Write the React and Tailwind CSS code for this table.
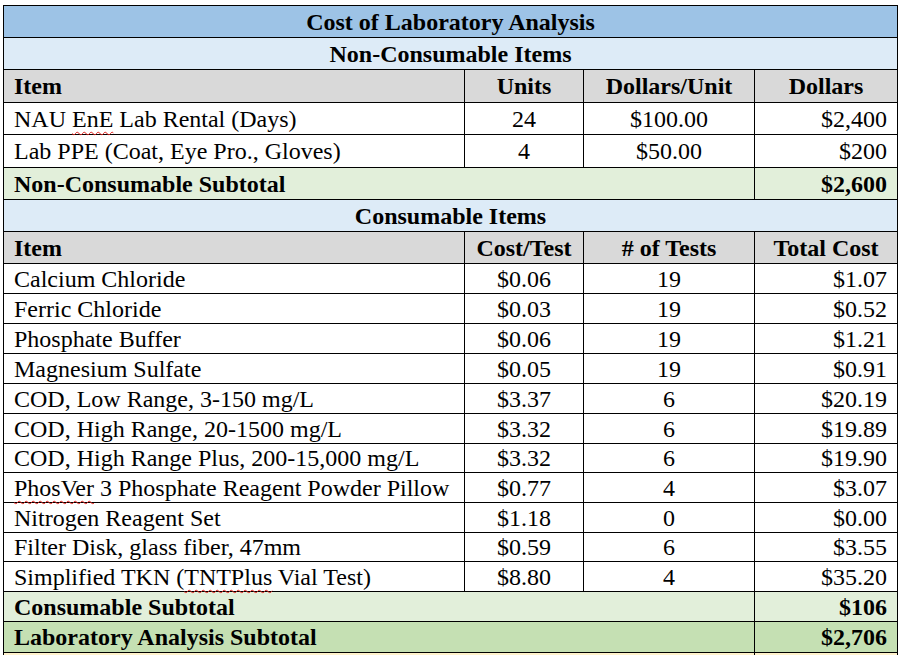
const nonConsumable = [
  { item: "NAU EnE Lab Rental (Days)", units: "24", perUnit: "$100.00", dollars: "$2,400", h: "h-[32px]" },
  { item: "Lab PPE (Coat, Eye Pro., Gloves)", units: "4", perUnit: "$50.00", dollars: "$200", h: "h-[33px]" },
];

const consumable = [
  { item: "Calcium Chloride", cost: "$0.06", tests: "19", total: "$1.07", h: "h-[30px]" },
  { item: "Ferric Chloride", cost: "$0.03", tests: "19", total: "$0.52", h: "h-[30px]" },
  { item: "Phosphate Buffer", cost: "$0.06", tests: "19", total: "$1.21", h: "h-[30px]" },
  { item: "Magnesium Sulfate", cost: "$0.05", tests: "19", total: "$0.91", h: "h-[30px]" },
  { item: "COD, Low Range, 3-150 mg/L", cost: "$3.37", tests: "6", total: "$20.19", h: "h-[30px]" },
  { item: "COD, High Range, 20-1500 mg/L", cost: "$3.32", tests: "6", total: "$19.89", h: "h-[30px]" },
  { item: "COD, High Range Plus, 200-15,000 mg/L", cost: "$3.32", tests: "6", total: "$19.90", h: "h-[29px]" },
  { item: "PhosVer 3 Phosphate Reagent Powder Pillow", cost: "$0.77", tests: "4", total: "$3.07", h: "h-[30px]" },
  { item: "Nitrogen Reagent Set", cost: "$1.18", tests: "0", total: "$0.00", h: "h-[30px]" },
  { item: "Filter Disk, glass fiber, 47mm", cost: "$0.59", tests: "6", total: "$3.55", h: "h-[29px]" },
  { item: "Simplified TKN (TNTPlus Vial Test)", cost: "$8.80", tests: "4", total: "$35.20", h: "h-[30px]" },
];

// red spell-check squiggle, like Word draws it
const Typo = ({ children }) => (
  <span className="underline decoration-wavy decoration-[#e0201b] decoration-1 underline-offset-[4px]">{children}</span>
);

const renderItem = (text) => {
  if (text.includes("EnE")) {
    return <span>NAU <Typo>EnE</Typo> Lab Rental (Days)</span>;
  }
  if (text.startsWith("PhosVer")) {
    return <span><Typo>PhosVer</Typo> 3 Phosphate Reagent Powder Pillow</span>;
  }
  if (text.includes("TNTPlus")) {
    return <span>Simplified TKN (<Typo>TNTPlus</Typo> Vial Test)</span>;
  }
  return <span>{text}</span>;
};

const Row = ({ h, bg = "bg-white", children }) => (
  <div className={`flex border-b border-black ${h} ${bg}`}>{children}</div>
);

const c1 = "w-[461px] shrink-0 border-r border-black flex items-center pl-[10px] whitespace-nowrap";
const c2 = "w-[119px] shrink-0 border-r border-black flex items-center justify-center";
const c3 = "w-[171px] shrink-0 border-r border-black flex items-center justify-center";
const c4 = "w-[142px] shrink-0 flex items-center";
const span3 = "w-[751px] shrink-0 border-r border-black flex items-center pl-[10px]";

const App = () => {
  return (
    <div className="min-h-[655px] bg-white overflow-hidden">
      <div className="ml-[3px] mt-[5px] w-[895px] border-t border-x border-black font-['Liberation_Serif',serif] text-[24px] leading-none text-black">
        {/* Title */}
        <Row h="h-[32px]" bg="bg-[#9dc3e6]">
          <div className="flex-1 flex items-center justify-center font-bold">Cost of Laboratory Analysis</div>
        </Row>

        {/* Non-consumable section */}
        <Row h="h-[32px]" bg="bg-[#ddebf7]">
          <div className="flex-1 flex items-center justify-center font-bold">Non-Consumable Items</div>
        </Row>
        <Row h="h-[33px]" bg="bg-[#d9d9d9]">
          <div className={`${c1} font-bold`}>Item</div>
          <div className={`${c2} font-bold`}>Units</div>
          <div className={`${c3} font-bold`}>Dollars/Unit</div>
          <div className={`${c4} justify-center font-bold`}>Dollars</div>
        </Row>
        {nonConsumable.map((r) => (
          <Row key={r.item} h={r.h}>
            <div className={c1}>{renderItem(r.item)}</div>
            <div className={c2}>{r.units}</div>
            <div className={c3}>{r.perUnit}</div>
            <div className={`${c4} justify-end pr-[10px]`}>{r.dollars}</div>
          </Row>
        ))}
        <Row h="h-[32px]" bg="bg-[#e2efda]">
          <div className={`${span3} font-bold`}>Non-Consumable Subtotal</div>
          <div className={`${c4} justify-end pr-[10px] font-bold`}>$2,600</div>
        </Row>

        {/* Consumable section */}
        <Row h="h-[32px]" bg="bg-[#ddebf7]">
          <div className="flex-1 flex items-center justify-center font-bold">Consumable Items</div>
        </Row>
        <Row h="h-[32px]" bg="bg-[#d9d9d9]">
          <div className={`${c1} font-bold`}>Item</div>
          <div className={`${c2} font-bold`}>Cost/Test</div>
          <div className={`${c3} font-bold`}># of Tests</div>
          <div className={`${c4} justify-center font-bold`}>Total Cost</div>
        </Row>
        {consumable.map((r) => (
          <Row key={r.item} h={r.h}>
            <div className={c1}>{renderItem(r.item)}</div>
            <div className={c2}>{r.cost}</div>
            <div className={c3}>{r.tests}</div>
            <div className={`${c4} justify-end pr-[10px]`}>{r.total}</div>
          </Row>
        ))}
        <Row h="h-[30px]" bg="bg-[#e2efda]">
          <div className={`${span3} font-bold`}>Consumable Subtotal</div>
          <div className={`${c4} justify-end pr-[10px] font-bold`}>$106</div>
        </Row>
        <Row h="h-[31px]" bg="bg-[#c5e0b3]">
          <div className={`${span3} font-bold`}>Laboratory Analysis Subtotal</div>
          <div className={`${c4} justify-end pr-[10px] font-bold`}>$2,706</div>
        </Row>
        <Row h="h-[30px]" bg="bg-[#fff2cc]">
          <div className={span3}></div>
          <div className={c4}></div>
        </Row>
      </div>
    </div>
  );
};

export default App;
